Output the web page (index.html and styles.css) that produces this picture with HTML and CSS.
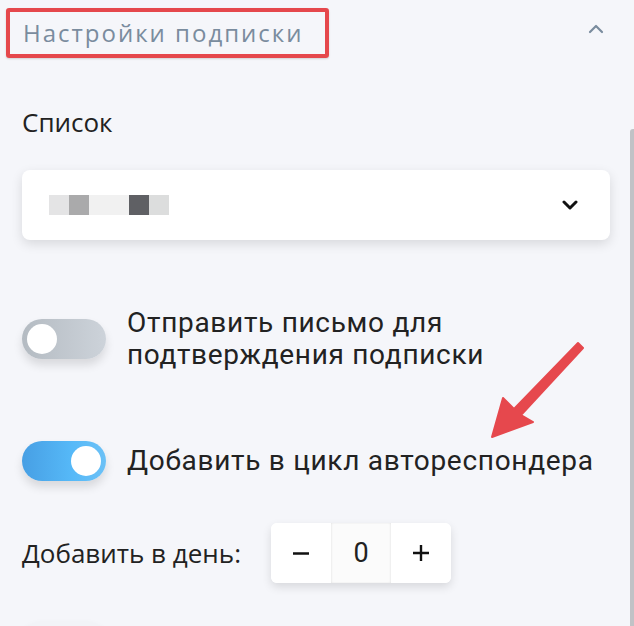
FILE: index.html
```html
<!DOCTYPE html>
<html lang="ru">
<head>
    <meta charset="UTF-8">
    <meta name="viewport" content="width=device-width, initial-scale=1.0">
    <title>Настройки подписки</title>
    <link rel="stylesheet" href="styles.css">
</head>
<body>
    <div class="header">
        <h2 class="title">Настройки подписки</h2>
        <svg class="collapse" width="16" height="10" viewBox="0 0 16 10">
            <path d="M2 8 L8 2 L14 8" fill="none" stroke="#7a8c9e" stroke-width="2.2" stroke-linecap="round" stroke-linejoin="round"/>
        </svg>
    </div>

    <div class="panel">
        <div class="label">Список</div>

        <div class="select">
            <div class="pixels">
                <span style="background:#e4e4e5"></span>
                <span style="background:#aaaaab"></span>
                <span style="background:#f1f1f1"></span>
                <span style="background:#f1f1f1"></span>
                <span style="background:#5f6064"></span>
                <span style="background:#dcdddd"></span>
            </div>
            <svg width="16" height="10" viewBox="0 0 16 10">
                <path d="M2 2 L8 8 L14 2" fill="none" stroke="#111" stroke-width="3" stroke-linecap="round" stroke-linejoin="round"/>
            </svg>
        </div>

        <div class="option option-first">
            <div class="toggle"><div class="knob"></div></div>
            <div class="option-text">Отправить письмо для<br>подтверждения подписки</div>
        </div>

        <div class="option option-second">
            <div class="toggle on"><div class="knob"></div></div>
            <div class="option-text">Добавить в цикл автореспондера</div>
        </div>

        <div class="per-day">
            <span class="per-day-label">Добавить в день:</span>
            <div class="stepper">
                <button class="step" aria-label="Уменьшить">
                    <svg width="16" height="16" viewBox="0 0 16 16">
                        <path d="M0 8.5 H16" stroke="#111" stroke-width="2.4"/>
                    </svg>
                </button>
                <div class="value">0</div>
                <button class="step" aria-label="Увеличить">
                    <svg width="16" height="16" viewBox="0 0 16 16">
                        <path d="M0 8 H16 M8 0 V16" stroke="#111" stroke-width="2.4"/>
                    </svg>
                </button>
            </div>
        </div>

        <div class="option option-next">
            <div class="toggle"><div class="knob"></div></div>
        </div>
    </div>

    <div class="scroll-thumb"></div>

    <svg class="pointer" width="634" height="626" viewBox="0 0 634 626">
        <polygon points="492,437 503,398 514,409 578,343 583,348 521,415 533,422"
                 fill="#e6484d" stroke="#e6484d" stroke-width="2" stroke-linejoin="round"/>
    </svg>
</body>
</html>
```

FILE: styles.css
```css
html {
    overflow: hidden;
}
body {
    margin: 0;
    height: 626px;
    overflow: hidden;
    background-color: #f5f6fa;
    font-family: Roboto, "Noto Sans", sans-serif;
    color: #222;
    position: relative;
}
.header {
    display: flex;
    justify-content: space-between;
    align-items: center;
    padding: 8px 30px 0 6px;
}
.title {
    margin: 0;
    height: 42px;
    padding: 0 21px 0 13px;
    border: 4px solid #e5484c;
    border-radius: 3px;
    font-family: "Open Sans", sans-serif;
    font-weight: 400;
    font-size: 24px;
    line-height: 42px;
    letter-spacing: 2px;
    color: #7a8c9e;
    box-shadow: 0 1px 2px rgba(0,0,0,0.15);
}
.collapse {
    margin-top: -8px;
}
.panel {
    padding: 0 24px 0 22px;
}
.label {
    margin-top: 48px;
    font-family: "Open Sans", sans-serif;
    font-size: 26px;
    line-height: 32px;
}
.select {
    margin-top: 32px;
    height: 70px;
    background-color: white;
    border-radius: 8px;
    box-shadow: 0 4px 12px rgba(0,0,0,0.12);
    display: flex;
    align-items: center;
    justify-content: space-between;
    padding: 0 32px 0 27px;
}
.pixels {
    display: flex;
    height: 20px;
}
.pixels span {
    width: 20px;
}
.option {
    display: flex;
    align-items: center;
    gap: 21px;
}
.option-first {
    margin-top: 67px;
}
.option-second {
    margin-top: 70px;
}
.option-text {
    font-size: 28px;
    line-height: 32px;
    letter-spacing: 0.7px;
}
.toggle {
    width: 84px;
    height: 40px;
    border-radius: 20px;
    background: linear-gradient(90deg, #b4bbc2, #cdd3da);
    box-shadow: 0 6px 10px rgba(0,0,0,0.12);
    display: flex;
    align-items: center;
    padding: 0 5px;
    box-sizing: border-box;
    flex-shrink: 0;
}
.toggle.on {
    background: linear-gradient(90deg, #479fe4, #56b9f8 60%, #6cc1f6);
    justify-content: flex-end;
}
.knob {
    width: 30px;
    height: 30px;
    border-radius: 50%;
    background-color: white;
}
.per-day {
    margin-top: 42px;
    display: flex;
    align-items: center;
    gap: 30px;
}
.per-day-label {
    font-family: "Open Sans", sans-serif;
    font-size: 26px;
}
.stepper {
    display: flex;
    height: 60px;
    background-color: white;
    border-radius: 6px;
    box-shadow: 0 4px 10px rgba(0,0,0,0.12);
    overflow: hidden;
}
.step {
    width: 60px;
    border: none;
    background-color: white;
    padding: 0;
    display: flex;
    align-items: center;
    justify-content: center;
}
.value {
    width: 60px;
    display: flex;
    align-items: center;
    justify-content: center;
    background-color: #fbfbfb;
    box-shadow: inset 1px 0 2px rgba(0,0,0,0.06), inset -1px 0 2px rgba(0,0,0,0.06);
    font-size: 27px;
}
.option-next {
    margin-top: 38px;
}
.option-next .toggle {
    background: #f2f3f7;
}
.scroll-thumb {
    position: absolute;
    right: 0;
    top: 129px;
    bottom: 0;
    width: 4px;
    background-color: #c1c2c6;
    border-radius: 3px 0 0 0;
}
.pointer {
    position: absolute;
    left: 0;
    top: 0;
    pointer-events: none;
}
```
